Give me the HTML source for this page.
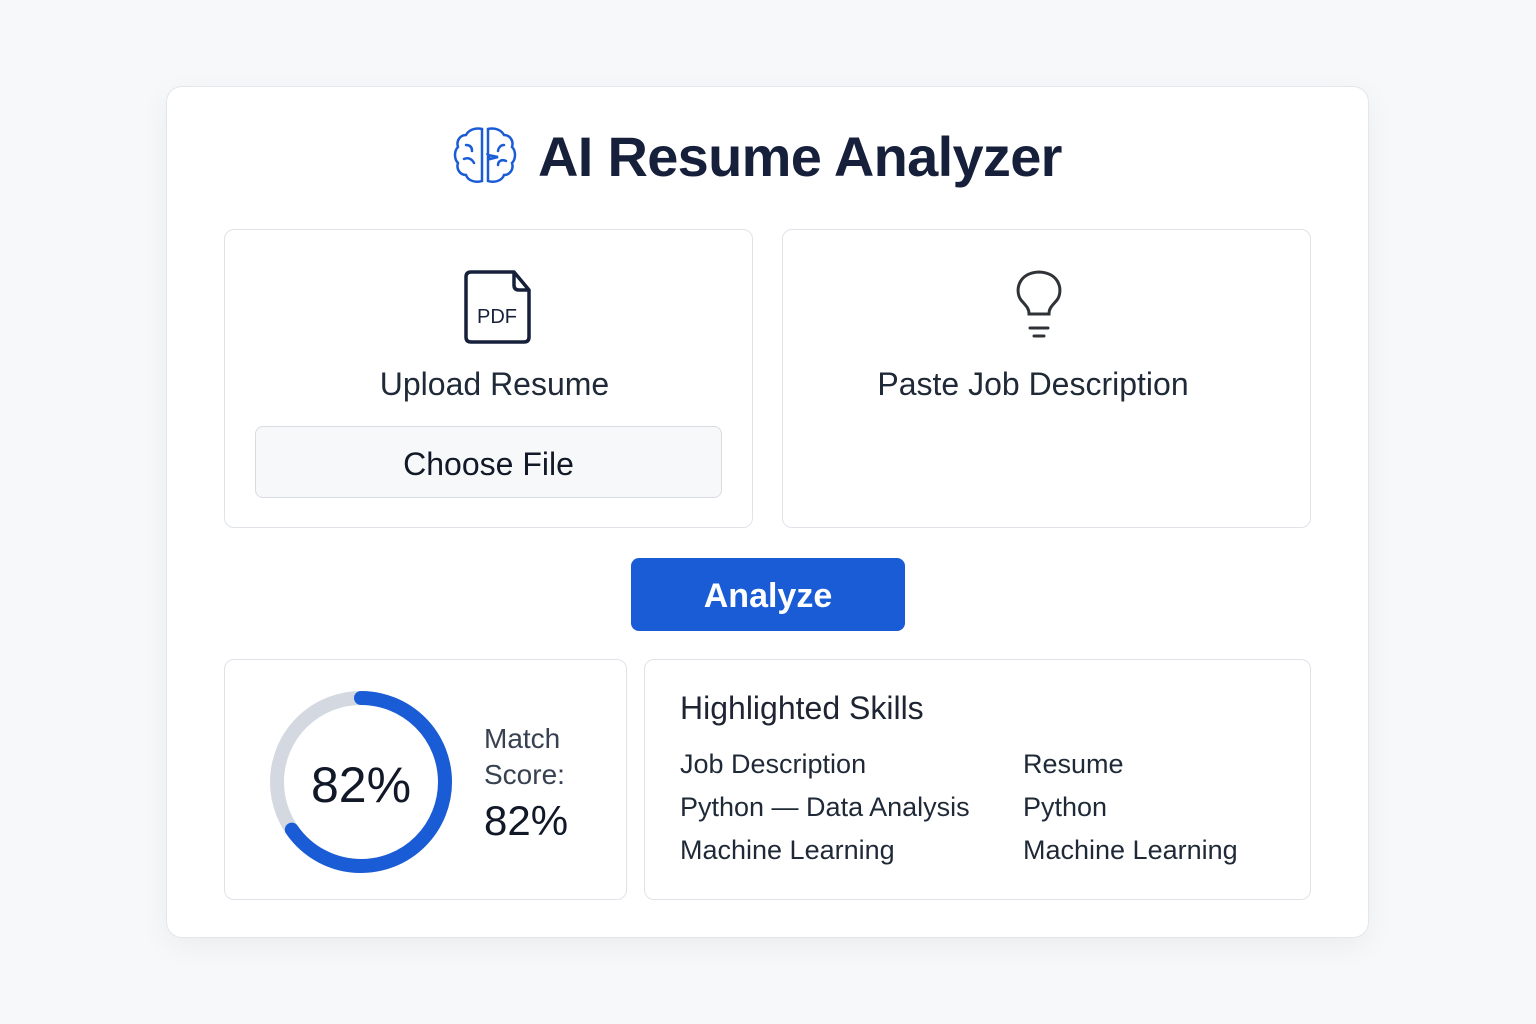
<!DOCTYPE html>
<html><head><meta charset="utf-8"><style>
*{margin:0;padding:0;box-sizing:border-box}
body{width:1536px;height:1024px;background:#f7f8f9;font-family:"Liberation Sans",sans-serif;position:relative;overflow:hidden;color:#111827}
.abs{position:absolute}
.card{left:166px;top:86px;width:1203px;height:852px;background:#fff;border:1px solid #e3e6ea;border-radius:16px;box-shadow:0 8px 30px rgba(0,0,0,0.05)}
.panel{background:#fff;border:1.5px solid #dfe3e8;border-radius:10px}
.t{white-space:nowrap}
</style></head><body>
<div class="abs card"></div>
<svg class="abs" style="left:452px;top:125px" width="66" height="60" viewBox="0 0 66 60" fill="none" stroke="#1a5cd6" stroke-width="2.5" stroke-linecap="round">
<path d="M30 4 C22 2 16 6 14 10 C8 10 4 16 6 22 C2 26 2 34 6 38 C4 44 8 50 14 50 C16 56 24 58 30 56"/>
<path d="M36 4 C44 2 50 6 52 10 C58 10 62 16 60 22 C64 26 64 34 60 38 C62 44 58 50 52 50 C50 56 42 58 36 56"/>
<path d="M30 4 V56 M36 4 V56"/>
<path d="M14 20 C18 20 20 22 20 26 M12 34 C16 32 20 34 22 38 M52 20 C48 20 46 24 46 26 M54 36 C50 34 46 36 46 40"/>
<path d="M36 30 L46 32 L38 34 Z"/>
</svg>
<div class="abs t" style="left:538px;top:124px;font-size:56px;font-weight:bold;color:#17203a;letter-spacing:-0.7px">AI Resume Analyzer</div>

<div class="abs panel" style="left:224px;top:229px;width:529px;height:299px"></div>
<div class="abs panel" style="left:782px;top:229px;width:529px;height:299px"></div>
<svg class="abs" style="left:462px;top:270px" width="72" height="75" viewBox="0 0 72 75" fill="none" stroke="#17203a" stroke-width="3.5" stroke-linejoin="round">
<path d="M9 2 H52 L67 20 V67 Q67 72 62 72 H9 Q4 72 4 67 V7 Q4 2 9 2 Z"/>
<path d="M52 2 V15 Q52 20 57 20 H67"/>
<text x="35" y="53" text-anchor="middle" font-family="Liberation Sans" font-size="20" fill="#17203a" stroke="none">PDF</text>
</svg>
<svg class="abs" style="left:1012px;top:270px" width="56" height="70" viewBox="0 0 56 70" fill="none" stroke="#2f3338" stroke-width="3" stroke-linecap="round">
<path d="M17 44 C17 38 14 36 9 30 C3 22 5 3 27 2 C49 3 51 22 45 30 C40 36 37 38 37 44 Z"/>
<path d="M18 58 H36 M22 66 H32"/>
</svg>
<div class="abs t" style="left:230px;width:529px;top:366px;text-align:center;font-size:32px;color:#1f2937">Upload Resume</div>
<div class="abs t" style="left:782px;width:502px;top:366px;text-align:center;font-size:32px;color:#1f2937">Paste Job Description</div>
<div class="abs" style="left:255px;top:426px;width:467px;height:72px;background:#f7f8f9;border:1.5px solid #d8dce2;border-radius:8px;text-align:center;line-height:74px;font-size:32px;color:#111827">Choose File</div>

<div class="abs" style="left:631px;top:558px;width:274px;height:73px;background:#1a5cd6;border-radius:8px;text-align:center;line-height:76px;font-size:34px;font-weight:bold;color:#fff">Analyze</div>

<div class="abs panel" style="left:224px;top:659px;width:403px;height:241px"></div>
<div class="abs panel" style="left:644px;top:659px;width:667px;height:241px"></div>
<svg class="abs" style="left:261px;top:682px" width="200" height="200" viewBox="0 0 200 200">
<circle cx="100" cy="100" r="84" fill="none" stroke="#d4d8e1" stroke-width="14"/>
<circle cx="100" cy="100" r="84" fill="none" stroke="#1a5cd6" stroke-width="14" stroke-linecap="round" stroke-dasharray="345 600" transform="rotate(-90 100 100)"/>
</svg>
<div class="abs t" style="left:261px;width:200px;top:756px;text-align:center;font-size:50px;color:#111827">82%</div>
<div class="abs t" style="left:484px;top:721px;font-size:28px;color:#374151;line-height:36px">Match<br>Score:</div>
<div class="abs t" style="left:484px;top:797px;font-size:42px;color:#111827">82%</div>

<div class="abs t" style="left:680px;top:690px;font-size:32px;color:#1f2433">Highlighted Skills</div>
<div class="abs t" style="left:680px;top:743px;font-size:27px;color:#1f2937;line-height:43px">Job Description<br>Python — Data Analysis<br>Machine Learning</div>
<div class="abs t" style="left:1023px;top:743px;font-size:27px;color:#1f2937;line-height:43px">Resume<br>Python<br>Machine Learning</div>
</body></html>
